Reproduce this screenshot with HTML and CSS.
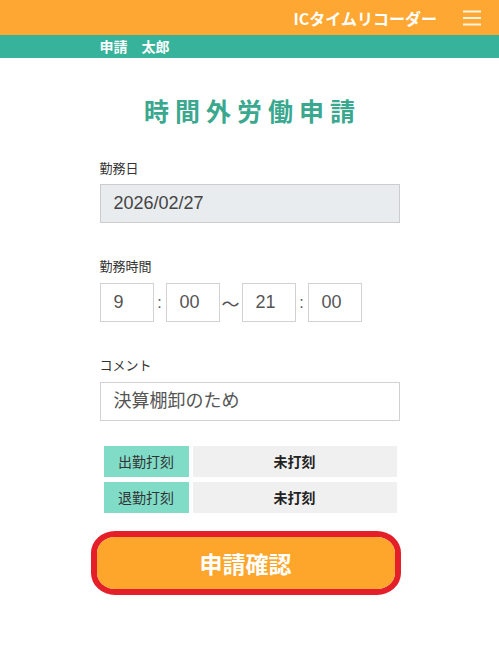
FILE: index.html
```html
<!DOCTYPE html>
<html lang="ja">
<head>
<meta charset="utf-8">
<link rel="stylesheet" href="styles.css">
</head>
<body>
<header class="topbar">
  <span class="app-title">ICタイムリコーダー</span>
  <svg class="menu" width="18" height="16" viewBox="0 0 18 16"><path d="M0 1.5H18M0 8H18M0 14.5H18" stroke="#fff4e0" stroke-width="2"/></svg>
</header>
<div class="userbar"><div class="wrap">申請　太郎</div></div>
<main class="wrap">
  <h1 class="title">時間外労働申請</h1>
  <div class="label">勤務日</div>
  <div class="field readonly">2026/02/27</div>
  <div class="label l2">勤務時間</div>
  <div class="time-row">
    <div class="field tbox">9</div><span class="sep">:</span>
    <div class="field tbox">00</div><span class="sep wave">〜</span>
    <div class="field tbox">21</div><span class="sep">:</span>
    <div class="field tbox">00</div>
  </div>
  <div class="label l2">コメント</div>
  <div class="field">決算棚卸のため</div>
  <div class="stamps">
    <div class="k">出勤打刻</div><div class="v">未打刻</div>
    <div class="k">退勤打刻</div><div class="v">未打刻</div>
  </div>
  <div class="mark"><div class="btn">申請確認</div></div>
</main>
</body>
</html>
```
FILE: styles.css
```css
* { box-sizing: border-box; }
body {
  margin: 0;
  background: #fff;
  font-family: "Liberation Sans", "Noto Sans CJK JP", sans-serif;
  color: #333;
}
.topbar {
  height: 35px;
  background: #fea833;
  display: flex;
  align-items: center;
  justify-content: flex-end;
  padding-right: 18px;
  gap: 26px;
}
.app-title {
  color: #fff;
  font-weight: bold;
  font-size: 16px;
  font-family: "Noto Sans CJK JP", sans-serif;
}
.menu { display: block; }
.userbar {
  height: 23px;
  background: #37b39b;
  color: #fff;
  font-weight: bold;
  font-size: 14px;
  line-height: 23px;
  font-family: "Noto Sans CJK JP", sans-serif;
}
.wrap { width: 300px; margin: 0 auto; }
.title {
  margin: 34px 0 0;
  text-align: center;
  font-size: 25px;
  line-height: 36px;
  letter-spacing: 6px;
  padding-left: 6px;
  color: #3aa88f;
  font-family: "Noto Sans CJK JP", sans-serif;
  font-weight: bold;
}
.label {
  margin-top: 31px;
  font-size: 13px;
  line-height: 18px;
  margin-bottom: 7px;
  color: #333;
  font-family: "Noto Sans CJK JP", sans-serif;
}
.label.l2 { margin-top: 34px; margin-bottom: 8px; }
.field {
  height: 39px;
  border: 1px solid #d2d2d2;
  padding-left: 13px;
  font-size: 18px;
  line-height: 37px;
  color: #555;
  background: #fff;
}
.readonly { background: #e9ecef; border-color: #ccc; color: #444; }
.time-row { display: flex; align-items: center; }
.tbox { width: 54px; }
.sep { width: 12px; text-align: center; font-size: 16px; color: #555; }
.sep.wave { width: 22px; font-size: 18px; }
.stamps {
  margin-top: 25px;
  padding: 0 3px 0 4px;
  display: grid;
  grid-template-columns: 85px 1fr;
  column-gap: 4px;
  row-gap: 5px;
  font-size: 14px;
  font-family: "Noto Sans CJK JP", sans-serif;
}
.stamps .k {
  background: #80dbc7;
  height: 31px;
  line-height: 31px;
  text-align: center;
  color: #333;
}
.stamps .v {
  background: #f0f0f0;
  height: 31px;
  line-height: 31px;
  text-align: center;
  font-weight: bold;
  color: #222;
}
.mark {
  margin: 18px 0 0 -9px;
  width: 310px;
  border: 6px solid #e41f2a;
  border-radius: 24px / 22px;
  overflow: hidden;
}
.btn {
  height: 52px;
  background: #fea62b;
  color: #fff;
  font-weight: bold;
  font-size: 23px;
  line-height: 52px;
  text-align: center;
  font-family: "Noto Sans CJK JP", sans-serif;
}
```
